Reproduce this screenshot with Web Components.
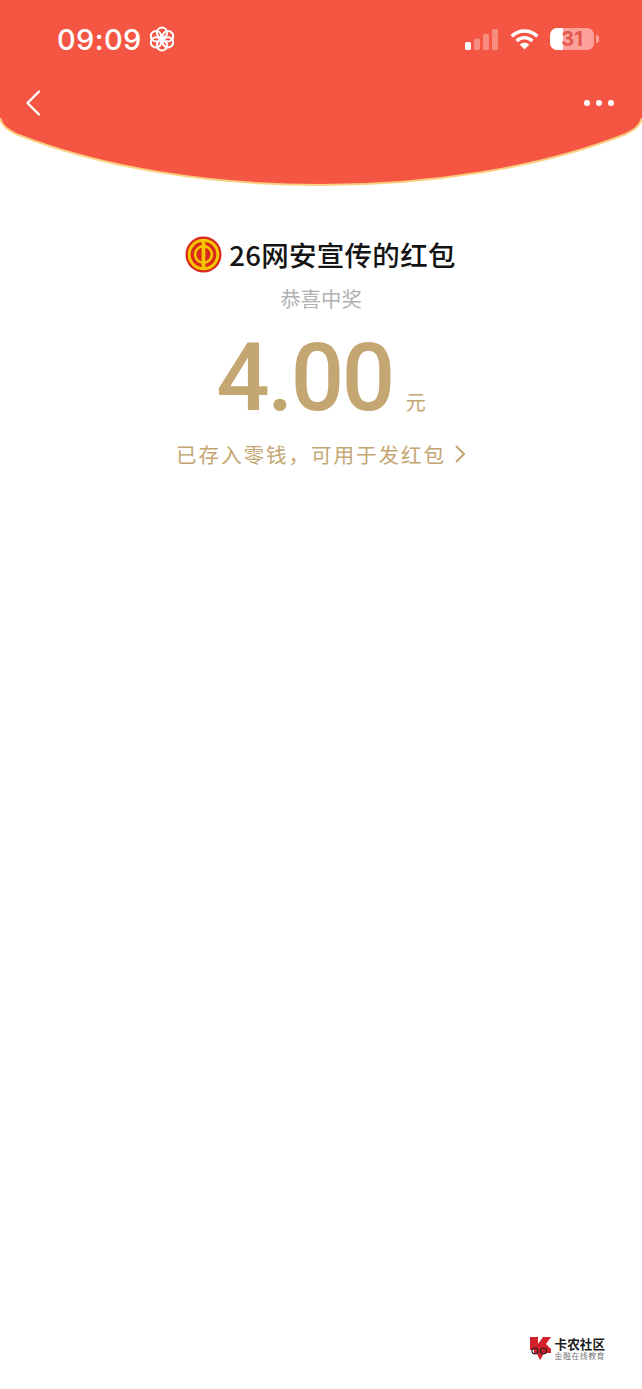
<!DOCTYPE html>
<html lang="zh-CN"><head><meta charset="utf-8"><title>红包</title>
<style>
html,body{margin:0;padding:0;background:#fff}
body{width:642px;height:1389px;overflow:hidden;font-family:"Noto Sans CJK SC","Noto Sans",sans-serif;display:flex;flex-direction:column}
</style></head><body>
<rp-header></rp-header>
<rp-summary sender="26网安宣传的红包" note="恭喜中奖" amount="4.00" unit="元" link="已存入零钱，可用于发红包"></rp-summary>
<rp-watermark></rp-watermark>
<script>
const def=(name,html,setup)=>customElements.define(name,class extends HTMLElement{
  constructor(){super();this.attachShadow({mode:'open'}).innerHTML=html}
  connectedCallback(){setup&&setup(this,this.shadowRoot)}
});
def('rp-status',`<style>
:host{display:flex;align-items:center;height:78px;padding:0 48px 0 57px;color:#fff;box-sizing:border-box}
.time{font:500 29px/1 Inter,"Liberation Sans",sans-serif;letter-spacing:.4px;margin-top:0}
.fl{margin-left:7px;display:block}
.sp{flex:1}
.r{display:flex;align-items:center}
.bat{position:relative;width:44px;height:22px;margin-left:11px;border-radius:7px;background:linear-gradient(90deg,#fff 0 13.5px,#fda29a 13.5px);}
.bat span{position:absolute;inset:0;text-align:center;font:700 20px/22px Inter,"Liberation Sans",sans-serif;color:#e4574c}
.tip{position:absolute;right:-4.5px;top:7px;width:3px;height:8px;border-radius:0 4px 4px 0;background:#fda29a}
</style>
<span class="time">09:09</span>
<svg class="fl" width="26" height="26" viewBox="0 0 26 26" fill="none" stroke="#fff" stroke-width="2"><g id="p"><circle cx="13" cy="6.8" r="5.2"/><circle cx="19" cy="10.2" r="5.2"/><circle cx="19" cy="16.4" r="5.2"/><circle cx="13" cy="19.4" r="5.2"/><circle cx="7" cy="16.4" r="5.2"/><circle cx="7" cy="10.2" r="5.2"/></g><circle cx="13" cy="13" r="1.8" fill="#fff" stroke="none"/></svg>
<span class="sp"></span>
<span class="r">
<svg width="33" height="21" viewBox="0 0 33 21"><rect x="0" y="13" width="6" height="8" rx="1.6" fill="#fff"/><g fill="#fff" opacity=".32"><rect x="9" y="9.5" width="6" height="11.5" rx="1.6"/><rect x="18" y="5" width="6" height="16" rx="1.6"/><rect x="27" y="0" width="6" height="21" rx="1.6"/></g></svg>
<svg width="29" height="22" viewBox="0 0 29 22" style="margin-left:12px"><g fill="none" stroke="#fff" stroke-width="3.5"><path d="M1.6 8.2C9.2 1.2 19.8 1.2 27.4 8.2"/><path d="M6.6 13C11.4 8.8 17.6 8.8 22.4 13"/></g><path d="M14.5 21.5 9.7 16.6C12.5 14.2 16.5 14.2 19.3 16.6Z" fill="#fff"/></svg>
<span class="bat"><span>31</span><i class="tip"></i></span>
</span>`);
def('rp-nav',`<style>
:host{display:flex;align-items:center;justify-content:space-between;height:50px;padding:0 28px 0 25px;box-sizing:border-box}
.d{display:flex;gap:6px}.d i{width:6px;height:6px;border-radius:50%;background:#fff}
svg{display:block}
</style>
<svg width="16" height="28" viewBox="0 0 16 28" fill="none" stroke="#fff" stroke-width="2.3" stroke-linecap="round" stroke-linejoin="round"><path d="M14 2.5 2.5 14 14 25.5"/></svg>
<span class="d"><i></i><i></i><i></i></span>`);
def('rp-header',`<style>
:host{display:block;position:relative;height:187px;flex:none}
svg{position:absolute;left:0;top:0;display:block}
.c{position:relative}
</style>
<svg width="642" height="187" viewBox="0 0 642 187"><path d="M0 0H642V118C640 126 634 130 626 134C540 168 430 185 321 185C212 185 102 168 16 134C8 130 2 126 0 118Z" fill="#f55644" stroke="#fbd07f" stroke-width="0"/><path d="M0 118C2 126 8 130 16 134C102 168 212 185 321 185C430 185 540 168 626 134C634 130 640 126 642 118" fill="none" stroke="#fbcf80" stroke-width="2"/></svg>
<div class="c"><rp-status></rp-status><rp-nav></rp-nav></div>`);
def('rp-badge',`<style>:host{display:block;width:37px;height:37px;flex:none}svg{display:block}</style>
<svg width="37" height="37" viewBox="0 0 37 37"><circle cx="18.5" cy="18.5" r="18" fill="#d8291c"/><circle cx="18.5" cy="18.5" r="14.3" fill="none" stroke="#f6c500" stroke-width="3"/><circle cx="18.5" cy="18.5" r="8.4" fill="none" stroke="#f6c500" stroke-width="2.6"/><rect x="16.6" y="4" width="3.8" height="29" fill="#f6c500"/><rect x="11" y="4" width="15" height="3" fill="#f6c500" opacity="0"/></svg>`);
def('rp-summary',`<style>
:host{display:flex;flex-direction:column;align-items:center;color:#141414}
.t{display:flex;align-items:center;margin-top:47px;height:40px;margin-left:-1px}
.n{font:500 27.5px/40px "Noto Sans CJK SC",sans-serif;margin-left:7px;letter-spacing:.3px;white-space:nowrap}
.s{font:400 20.4px/30px "Noto Sans CJK SC",sans-serif;color:#b2b2b2;margin-top:9px}
.a{display:flex;align-items:baseline;color:#c4a672;margin-top:15px;margin-left:0}
.v{font:500 94px/100px Roboto,sans-serif;letter-spacing:-2.5px}
.u{font:400 20px/1 "Noto Sans CJK SC",sans-serif;margin-left:13px}
.l{display:flex;align-items:center;color:#c4a672;font:400 20.6px/30px "Noto Sans CJK SC",sans-serif;margin-top:11px;letter-spacing:1.9px}
.l svg{margin-left:8px;display:block}
</style>
<div class="t"><rp-badge></rp-badge><span class="n"></span></div>
<div class="s"></div>
<div class="a"><span class="v"></span><span class="u"></span></div>
<div class="l"><span class="k"></span><svg width="12" height="20" viewBox="0 0 12 20" fill="none" stroke="#c4a672" stroke-width="2.1"><path d="M2 2l8 8-8 8"/></svg></div>`,(h,s)=>{
  s.querySelector('.n').textContent=h.getAttribute('sender');
  s.querySelector('.s').textContent=h.getAttribute('note');
  s.querySelector('.v').textContent=h.getAttribute('amount');
  s.querySelector('.u').textContent=h.getAttribute('unit');
  s.querySelector('.k').textContent=h.getAttribute('link');
});
def('rp-watermark',`<style>
:host{display:flex;margin-top:auto;justify-content:flex-end;align-items:center;padding:0 37px 28px 0;gap:3px}
svg{display:block}
.b{display:flex;flex-direction:column;align-items:flex-start}
.x{font:700 12.6px/14px "Noto Sans CJK SC",sans-serif;color:#1c1c1c;white-space:nowrap}
.y{font:400 7.8px/10px "Noto Sans CJK SC",sans-serif;color:#777;white-space:nowrap;letter-spacing:.6px}
</style>
<svg width="23" height="25" viewBox="0 0 23 25"><path d="M1 1H9V8L14 1H22L17 8 22 13V17H15L13 21 11 24 8 18H5V14H1Z" fill="#d3202a"/><g fill="none" stroke="#222" stroke-width="1.1"><circle cx="6" cy="15" r="3"/><circle cx="14.5" cy="15" r="3"/></g></svg>
<div class="b"><span class="x">卡农社区</span><span class="y">金融在线教育</span></div>`);
</script>
</body></html>
